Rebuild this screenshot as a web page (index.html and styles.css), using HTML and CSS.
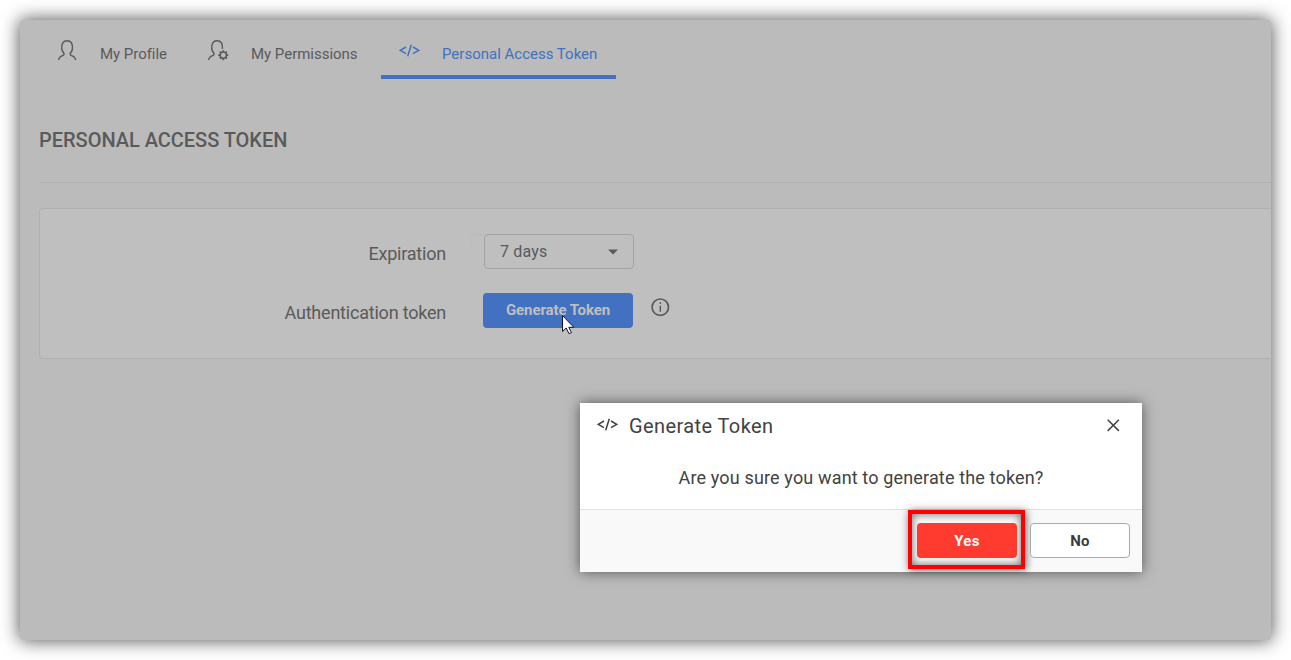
FILE: index.html
```html
<!DOCTYPE html>
<html lang="en">
<head>
<meta charset="utf-8">
<title>Personal Access Token</title>
<link rel="stylesheet" href="styles.css">
</head>
<body>
<svg class="defs" width="0" height="0" aria-hidden="true">
  <symbol id="code" viewBox="0 0 21 13">
    <path d="M7 3 1.3 6.3 7 9.6M14 3l5.7 3.3L14 9.6M12.3.7 8.7 12.2" fill="none" stroke="currentColor" stroke-width="1.5"/>
  </symbol>
</svg>
<main class="page">
  <nav class="tabs">
    <a class="tab tab-profile">
      <svg class="icon-user" width="22" height="24" viewBox="0 0 22 24"><path d="M2.700 22c.2-2.600 1.600-3.600 3.900-4.400 1.100-.4 1.600-.9 1.400-1.800-.3-1.300-2-2.400-2.200-4.900C5.400 5.800 7 2.800 11.100 2.800s5.700 3 5.300 8.100c-.2 2.500-1.900 3.600-2.200 4.900-.2.900.3 1.400 1.400 1.800 2.300.8 3.700 1.800 3.900 4.400" fill="none" stroke="currentColor" stroke-width="1.500"/></svg>
      <span>My Profile</span>
    </a>
    <a class="tab tab-permissions">
      <svg class="icon-user" width="24" height="24" viewBox="0 0 24 24"><path d="M1.700 22c.2-2.600 1.600-3.600 3.900-4.400 1.100-.4 1.600-.9 1.400-1.800-.3-1.300-2-2.400-2.200-4.900C4.400 5.800 6 2.800 10.100 2.800s5.700 3 5.300 8.100" fill="none" stroke="currentColor" stroke-width="1.500"/><circle cx="16.300" cy="17.200" r="3.100" fill="none" stroke="currentColor" stroke-width="1.500"/><path d="M16.300 12.200v1.900M16.300 20.300v1.900M11.300 17.200h1.900M19.400 17.200h1.900M12.800 13.700l1.300 1.300M18.500 19.400l1.300 1.300M19.800 13.700l-1.300 1.300M14.100 19.400l-1.300 1.300" stroke="currentColor" stroke-width="1.700"/></svg>
      <span>My Permissions</span>
    </a>
    <a class="tab tab-token">
      <svg class="icon-code" width="21" height="13"><use href="#code"/></svg>
      <span>Personal Access Token</span>
    </a>
  </nav>
  <h1 class="title">PERSONAL ACCESS TOKEN</h1>
  <section class="card">
    <div class="row">
      <label class="label expiration">Expiration</label>
      <div class="select-edge"></div>
      <div class="select"><span>7 days</span><svg width="10" height="6" viewBox="0 0 10 6"><path d="M0 .5h10L5 5.500z" fill="currentColor"/></svg></div>
    </div>
    <div class="row">
      <label class="label">Authentication token</label>
      <button class="generate">Generate Token</button>
      <svg class="info" width="20" height="20" viewBox="0 0 20 20"><circle cx="10.300" cy="10.200" r="8.200" fill="none" stroke="currentColor" stroke-width="1.700"/><path d="M10.300 8.700v6.100M10.300 5.200v1.700" stroke="currentColor" stroke-width="1.500"/></svg>
    </div>
  </section>
</main>
<svg class="cursor" width="14" height="21" viewBox="0 0 14 21"><path d="M.5.500v16l3.700-3.500 2.800 5.700 2.400-1.100-2.600-5.300h5z" fill="#fff" stroke="#111722" stroke-width="1"/></svg>
<div class="dialog" role="dialog">
  <header class="dialog-head">
    <svg class="dialog-code" width="21" height="13"><use href="#code"/></svg>
    <h2 class="dialog-title">Generate Token</h2>
    <svg class="close" width="14" height="14" viewBox="0 0 14 14"><path d="m1.700 1.700 11.200 11.200M12.900 1.700 1.700 12.900" stroke="currentColor" stroke-width="1.500"/></svg>
  </header>
  <p class="question"><span>Are you sure you want to generate the token?</span></p>
  <footer class="dialog-foot">
    <div class="highlight"><button class="btn yes">Yes</button></div>
    <button class="btn no">No</button>
  </footer>
</div>
</body>
</html>
```
FILE: styles.css
```css
* { box-sizing: border-box; }
body {
  margin: 0;
  padding: 20px;
  height: 660px;
  overflow: hidden;
  background: #fff;
  color: #5a5a5a;
  font-family: Roboto, "Liberation Sans", sans-serif;
}
h1, h2, p { margin: 0; }
button { font-family: inherit; }
svg { display: block; flex: none; }
.defs { position: absolute; }
.page {
  width: 1251px;
  height: 620px;
  padding-left: 19px;
  background: #bbb;
  border-radius: 4px;
  box-shadow: 0 0 18px 1px rgba(0, 0, 0, .65);
}
.tabs { display: flex; height: 59px; }
.tab {
  display: flex;
  height: 59px;
  font-size: 15px;
  line-height: 20px;
  white-space: nowrap;
}
.tab span { margin-top: 24px; }
.tab-profile { width: 168px; padding-left: 17px; letter-spacing: -.03px; }
.tab-profile span { margin-left: 22px; }
.tab-permissions { width: 174px; letter-spacing: -.02px; }
.tab-permissions span { margin-left: 20px; }
.icon-user { margin-top: 18px; }
.tab-token {
  width: 235px;
  padding-left: 18px;
  border-bottom: 4px solid #4271c1;
  color: #4271c1;
}
.icon-code { margin-top: 24px; }
.tab-token span { margin-left: 22px; }
.title {
  height: 104px;
  padding-top: 49px;
  border-bottom: 1px solid #b0b0b0;
  font-size: 20px;
  font-weight: 500;
  line-height: 24px;
  letter-spacing: -.03px;
}
.card {
  height: 151px;
  margin-top: 25px;
  padding-top: 25px;
  border: 1px solid #b0b0b0;
  border-right: 0;
  border-radius: 4px 0 0 4px;
  background: #bfbfbf;
}
.row { display: flex; height: 59px; }
.label {
  width: 406px;
  margin-right: 37px;
  padding-top: 8px;
  text-align: right;
  font-size: 18px;
  line-height: 24px;
  letter-spacing: -.21px;
}
.expiration { margin-right: 25px; }
.select-edge {
  width: 13px;
  height: 12px;
  border-top: 1px solid #b9b9b9;
  border-left: 1px solid #bcbcbc;
  border-radius: 4px 0 0 0;
}
.select {
  display: flex;
  align-items: center;
  justify-content: space-between;
  width: 150px;
  height: 35px;
  padding: 0 15px;
  border: 1px solid #a3a3a3;
  border-radius: 4px;
  font-size: 16px;
  letter-spacing: .15px;
}
.generate {
  width: 150px;
  height: 35px;
  padding: 0 0 2px;
  border: 0;
  border-radius: 4px;
  background: #4271c1;
  color: #bfbfbf;
  font-size: 15px;
  font-weight: 700;
  letter-spacing: -.1px;
}
.info { margin: 4px 0 0 17px; }
.cursor { position: absolute; left: 562px; top: 315px; }
.dialog {
  position: absolute;
  left: 580px;
  top: 403px;
  width: 562px;
  height: 169px;
  background: #fff;
  color: #424242;
  box-shadow: 0 0 13px rgba(0, 0, 0, .55);
}
.dialog-head { display: flex; height: 46px; padding: 0 22px 0 17px; }
.dialog-code { margin-top: 15px; }
.dialog-title {
  flex: 1;
  margin: 11px 0 0 11px;
  font-size: 20px;
  font-weight: 400;
  line-height: 24px;
  letter-spacing: .4px;
}
.close { margin-top: 15px; }
.question {
  height: 60px;
  padding-top: 17px;
  text-align: center;
  font-size: 18px;
  line-height: 24px;
  letter-spacing: .15px;
}
.dialog-foot {
  display: flex;
  align-items: flex-start;
  justify-content: flex-end;
  height: 63px;
  padding-right: 12px;
  border-top: 1px solid #e0e0e0;
  background: #f9f9f9;
}
.highlight {
  width: 117px;
  height: 59px;
  margin-right: 5px;
  padding: 9px 5px;
  border: 4px solid #f00;
  box-shadow: 1px 1px 8px rgba(0, 0, 0, .6), inset 0 0 8px rgba(0, 0, 0, .6);
}
.btn {
  display: block;
  width: 100px;
  height: 35px;
  padding: 0;
  border: 0;
  border-radius: 4px;
  font-size: 15px;
  font-weight: 700;
  letter-spacing: .3px;
}
.yes { background: #ff3b30; color: #fff; }
.no { margin-top: 13px; border: 1px solid #aaa; background: #fff; color: #3b3b3b; }
```
